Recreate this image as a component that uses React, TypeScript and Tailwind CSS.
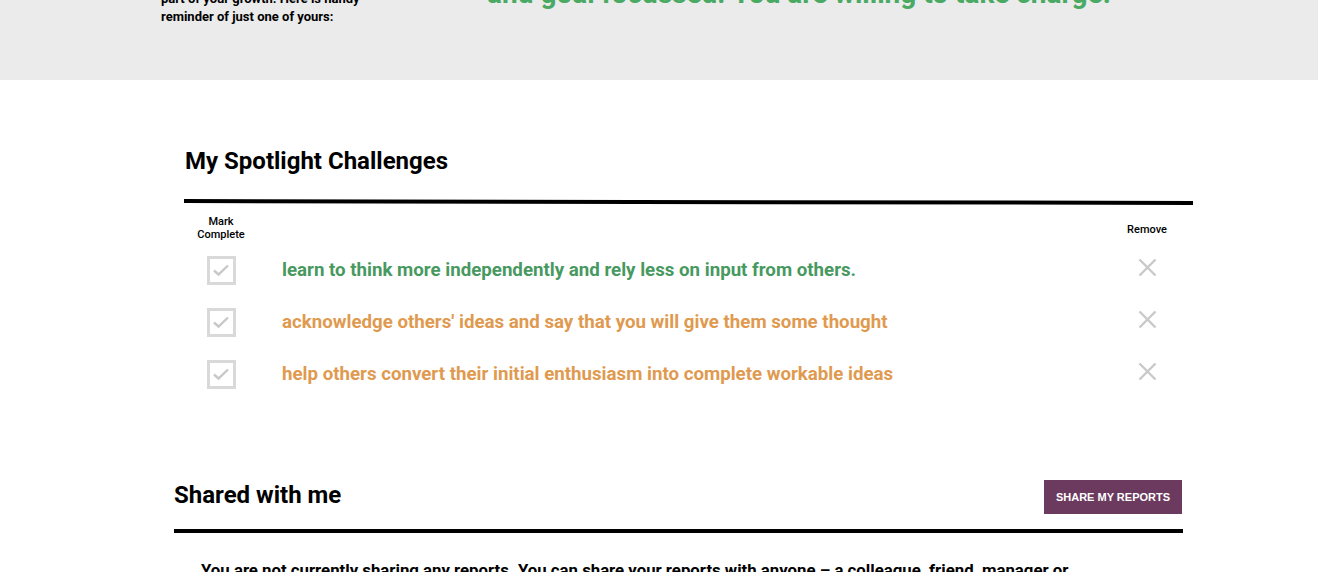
import React from "react";

const rows = [
  { text: "learn to think more independently and rely less on input from others.", color: "text-[#47995f]" },
  { text: "acknowledge others' ideas and say that you will give them some thought", color: "text-[#e09a50]" },
  { text: "help others convert their initial enthusiasm into complete workable ideas", color: "text-[#e09a50]" },
];

function Check() {
  return (
    <div className="w-[29px] h-[29px] border-[3px] border-[#d9d9d9] flex items-center justify-center">
      <svg width="18" height="14" viewBox="0 0 18 14" fill="none">
        <path d="M2 7.5 L6.5 11.5 L16 2.5" stroke="#c8c8c8" strokeWidth="2.4" />
      </svg>
    </div>
  );
}

function XIcon() {
  return (
    <svg width="19" height="19" viewBox="0 0 19 19" fill="none">
      <path d="M1.5 1.5 L17.5 17.5 M17.5 1.5 L1.5 17.5" stroke="#c9c9c9" strokeWidth="2.4" />
    </svg>
  );
}

export default function App() {
  return (
    <div className="w-[1318px] h-[572px] overflow-hidden bg-white text-black" style={{ fontFamily: "Roboto, 'Liberation Sans', sans-serif" }}>
      <div className="h-[80px] bg-[#ebebeb] overflow-hidden">
        <div className="flex pl-[161px]">
          <div className="w-[326px] text-[13px] font-bold leading-[18px] -mt-[10px]">
            part of your growth. Here is handy
            <br />
            reminder of just one of yours:
          </div>
          <div className="text-[#4aaa64] font-bold text-[28px] leading-[34px] -mt-[23px] whitespace-nowrap">
            and goal focussed. You are willing to take charge.
          </div>
        </div>
      </div>

      <div className="ml-[184px] w-[1009px] pt-[66px]">
        <h2 className="text-[24px] font-bold leading-[30px] pl-px">My Spotlight Challenges</h2>
        <div className="mt-[24px] h-[4px] bg-black rotate-[0.1deg]" />
        <div className="flex items-end mt-[11px]">
          <div className="w-[74px] text-center text-[11px] font-medium leading-[13px]">
            Mark
            <br />
            Complete
          </div>
          <div className="flex-1" />
          <div className="w-[74px] text-center text-[11px] font-medium leading-[13px] mr-[9px] mb-[5px]">Remove</div>
        </div>
        <div className="mt-[3px] flex flex-col">
          {rows.map((r, i) => (
            <div key={i} className="h-[52px] flex items-center">
              <div className="w-[74px] flex justify-center">
                <Check />
              </div>
              <div className={`flex-1 pl-[24px] text-[18.7px] font-bold ${r.color}`}>{r.text}</div>
              <div className="w-[74px] flex justify-center mr-[9px] -mt-[6px]">
                <XIcon />
              </div>
            </div>
          ))}
        </div>
      </div>

      <div className="ml-[174px] w-[1009px] mt-[80px]">
        <div className="flex items-start justify-between">
          <h2 className="text-[24px] font-bold leading-[30px]">Shared with me</h2>
          <button className="w-[138px] h-[34px] bg-[#6b3a5e] text-white text-[11px] font-bold mr-px" style={{ fontFamily: "'Liberation Sans', Arial, sans-serif" }}>
            SHARE MY REPORTS
          </button>
        </div>
        <div className="mt-[15px] h-[4px] bg-black" />
        <p className="mt-[25px] pl-[27px] text-[16.8px] leading-[24px] font-bold whitespace-nowrap">
          You are not currently sharing any reports. You can share your reports with anyone – a colleague, friend, manager or
        </p>
      </div>
    </div>
  );
}
